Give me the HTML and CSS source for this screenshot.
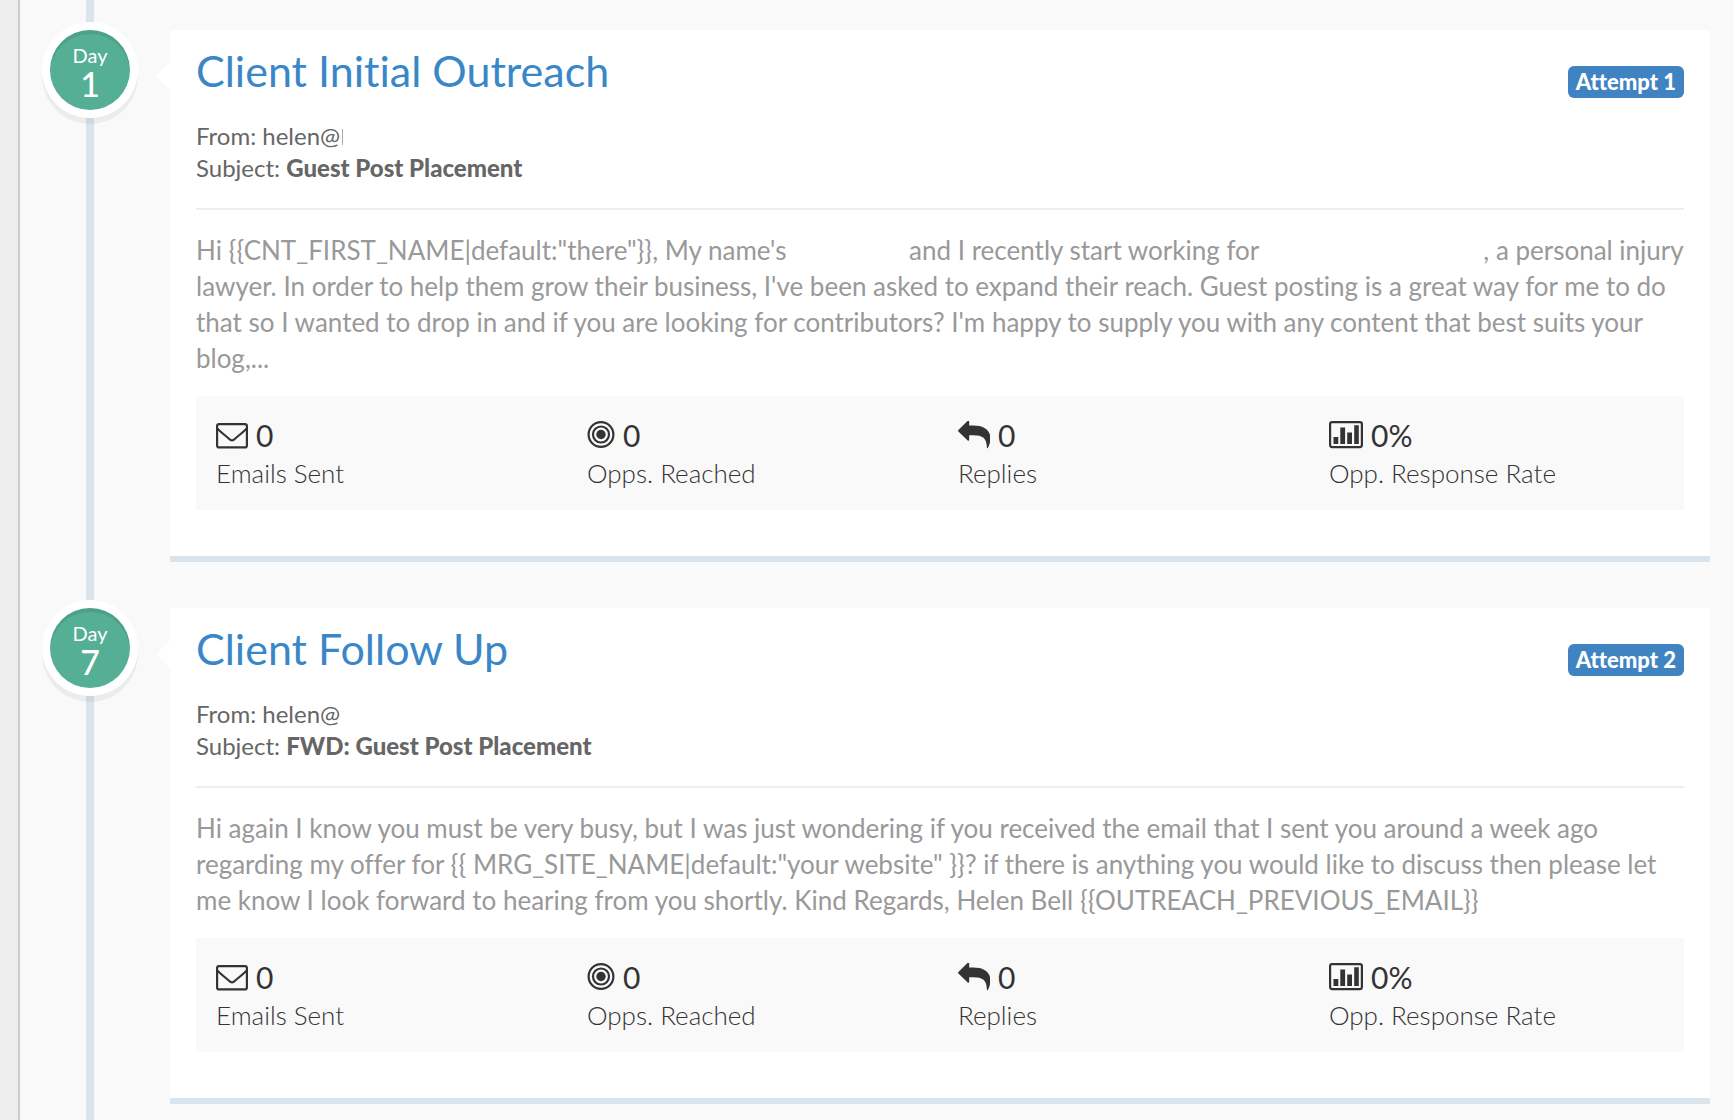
FILE: index.html
```html
<!DOCTYPE html>
<html lang="en">
<head>
<meta charset="utf-8">
<title>Outreach sequence</title>
<link rel="stylesheet" href="styles.css">
</head>
<body>
<svg class="sprite" aria-hidden="true">
  <symbol id="icon-envelope" viewBox="0 0 32 28">
    <rect x="1.100" y="3.100" width="29.800" height="23.300" rx="2" fill="none" stroke="currentColor" stroke-width="2.200"/>
    <path d="M1.500 7.500C3 10 9 14 13 17.800C15 19.800 17 19.800 19 17.800C23 14 29 10 30.500 7.500" fill="none" stroke="currentColor" stroke-width="2.200"/>
  </symbol>
  <symbol id="icon-target" viewBox="0 0 28 28">
    <g fill="none" stroke="currentColor" stroke-width="2.200">
      <circle cx="14" cy="13.500" r="12.400"/>
      <circle cx="14" cy="13.500" r="8"/>
    </g>
    <circle cx="14" cy="13.500" r="4.700" fill="currentColor"/>
  </symbol>
  <symbol id="icon-reply" viewBox="0 0 32 28">
    <path d="M0.400 9L9.700 -0.200Q11.200 -1.200 11.200 0.600V4.500H15C26 4.500 32.400 9 32.400 17.500Q32.400 22 30 26.800Q29.200 28 28.900 26.500C28.500 17 25 14.200 15 14.200H11.200V18.600Q11 20.500 9.700 19.400L0.400 10.600Q-0.400 9.800 0.400 9Z" fill="currentColor"/>
  </symbol>
  <symbol id="icon-chart" viewBox="0 0 34 28">
    <rect x="1.100" y="1.100" width="31.800" height="25" rx="2" fill="none" stroke="currentColor" stroke-width="2.200"/>
    <path d="M4.500 16h4.800v7h-4.800zM11.300 6.500h4.800v16.500h-4.800zM18.200 11.500h4.800v11.500h-4.800zM25.200 4.200h4.600v18.800h-4.600z" fill="currentColor"/>
  </symbol>
</svg>
<div class="page">
  <main class="timeline">
    <article class="step">
      <div class="day"><span class="day-label">Day</span><span class="day-number">1</span></div>
      <section class="card">
        <header class="card-header">
          <h2 class="card-title"><a href="#">Client Initial Outreach</a></h2>
          <span class="badge">Attempt 1</span>
        </header>
        <div class="meta">
          <div>From: helen@<span class="clipped"></span></div>
          <div>Subject: <strong>Guest Post Placement</strong></div>
        </div>
        <p class="message">Hi {{CNT_FIRST_NAME|default:"there"}}, My name's <span class="after-name">and I recently start working for</span><span class="after-company">, a personal</span> injury lawyer. In order to help them grow their business, I've been asked to expand their reach. Guest posting is a great way for me to do that so I wanted to drop in and if you are looking for contributors? I'm happy to supply you with any content that best suits your blog,...</p>
        <div class="stats">
          <div class="stat"><div class="value"><svg class="icon icon-envelope"><use href="#icon-envelope"/></svg>0</div><div class="label">Emails Sent</div></div>
          <div class="stat"><div class="value"><svg class="icon icon-target"><use href="#icon-target"/></svg>0</div><div class="label">Opps. Reached</div></div>
          <div class="stat"><div class="value"><svg class="icon icon-reply"><use href="#icon-reply"/></svg>0</div><div class="label">Replies</div></div>
          <div class="stat"><div class="value"><svg class="icon icon-chart"><use href="#icon-chart"/></svg>0%</div><div class="label">Opp. Response Rate</div></div>
        </div>
      </section>
    </article>
    <article class="step">
      <div class="day"><span class="day-label">Day</span><span class="day-number">7</span></div>
      <section class="card">
        <header class="card-header">
          <h2 class="card-title"><a href="#">Client Follow Up</a></h2>
          <span class="badge">Attempt 2</span>
        </header>
        <div class="meta">
          <div>From: helen@</div>
          <div>Subject: <strong>FWD: Guest Post Placement</strong></div>
        </div>
        <p class="message">Hi again I know you must be very busy, but I was just wondering if you received the email that I sent you around a week ago regarding my offer for {{ MRG_SITE_NAME|default:"your website" }}? if there is anything you would like to discuss then please let me know I look forward to hearing from you shortly. Kind Regards, Helen Bell {{OUTREACH_PREVIOUS_EMAIL}}</p>
        <div class="stats">
          <div class="stat"><div class="value"><svg class="icon icon-envelope"><use href="#icon-envelope"/></svg>0</div><div class="label">Emails Sent</div></div>
          <div class="stat"><div class="value"><svg class="icon icon-target"><use href="#icon-target"/></svg>0</div><div class="label">Opps. Reached</div></div>
          <div class="stat"><div class="value"><svg class="icon icon-reply"><use href="#icon-reply"/></svg>0</div><div class="label">Replies</div></div>
          <div class="stat"><div class="value"><svg class="icon icon-chart"><use href="#icon-chart"/></svg>0%</div><div class="label">Opp. Response Rate</div></div>
        </div>
      </section>
    </article>
  </main>
</div>
</body>
</html>
```
FILE: styles.css
```css
* { box-sizing: border-box; }

body {
  margin: 0;
  background: #f9f9f9;
  color: #666;
  font-family: Lato, "Open Sans", sans-serif;
  font-variant-ligatures: none;
}

.sprite { display: none; }

.page {
  min-height: 100vh;
  border-left: 18px solid #eee;
}

.timeline {
  position: relative;
  display: flex;
  flex-direction: column;
  gap: 46px;
  min-height: 100vh;
  padding: 30px 24px 16px 30px;
  border-left: 2px solid #ccc;
}

/* Vertical rail running behind the day markers */
.timeline::before {
  content: "";
  position: absolute;
  top: 0;
  bottom: 0;
  left: 66px;
  width: 8px;
  background: #dae4ec;
}

.step {
  display: flex;
  align-items: flex-start;
  gap: 40px;
}

.day {
  position: relative;
  flex: none;
  display: flex;
  flex-direction: column;
  align-items: center;
  width: 80px;
  height: 80px;
  padding-top: 13px;
  border-radius: 50%;
  background: #54af94;
  color: #fff;
  box-shadow: 0 0 0 8px #fff, inset 0 4px 0 rgba(0, 0, 0, 0.08), 0 6px 0 8px rgba(0, 0, 0, 0.05);
}

.day-label { font-size: 20px; line-height: 24px; }
.day-number { font-size: 34px; font-weight: 500; line-height: 34px; }

.card {
  position: relative;
  flex: 1;
  min-width: 0;
  padding: 13px 26px 46px;
  border-bottom: 6px solid #dae4ec;
  background: #fff;
}

/* Pointer towards the day marker */
.card::before {
  content: "";
  position: absolute;
  top: 32px;
  left: -14px;
  border: 14px solid transparent;
  border-left-width: 0;
  border-right-color: #fff;
}

.card-header {
  display: flex;
  justify-content: space-between;
  align-items: flex-start;
}

.card-title {
  margin: 0;
  font-size: 43px;
  font-weight: 400;
  line-height: 56px;
}

.card-title a { color: #3a87c8; text-decoration: none; }

.badge {
  margin-top: 23px;
  padding: 0 8px;
  border-radius: 6px;
  background: #3f83c2;
  color: #fff;
  font-size: 22px;
  font-weight: 900;
  line-height: 32px;
}

.meta {
  padding: 21px 0 24px;
  border-bottom: 2px solid #eee;
  font-size: 24px;
  line-height: 32px;
}

.meta strong { font-weight: 900; }

.clipped {
  display: inline-block;
  width: 1px;
  height: 16px;
  margin-left: 2px;
  background: #aaa;
}

.message {
  margin: 22px 0 20px;
  color: #999;
  font-size: 26px;
  line-height: 36px;
}

/* Room left for the withheld sender and company names */
.after-name { margin-left: 116px; }
.after-company { margin-left: 224px; }

.stats {
  display: grid;
  grid-template-columns: repeat(4, 1fr);
  padding: 20px 4px 18px 0;
  background: #f9f9f9;
  color: #333;
}

.stat { padding-left: 20px; }

.value {
  display: flex;
  align-items: center;
  gap: 8px;
  font-size: 30px;
  line-height: 38px;
}

.icon { height: 28px; overflow: visible; }
.icon-envelope { width: 32px; }
.icon-target { width: 28px; }
.icon-reply { width: 32px; }
.icon-chart { width: 34px; }

.label {
  font-size: 26px;
  font-weight: 300;
  line-height: 38px;
}
```
